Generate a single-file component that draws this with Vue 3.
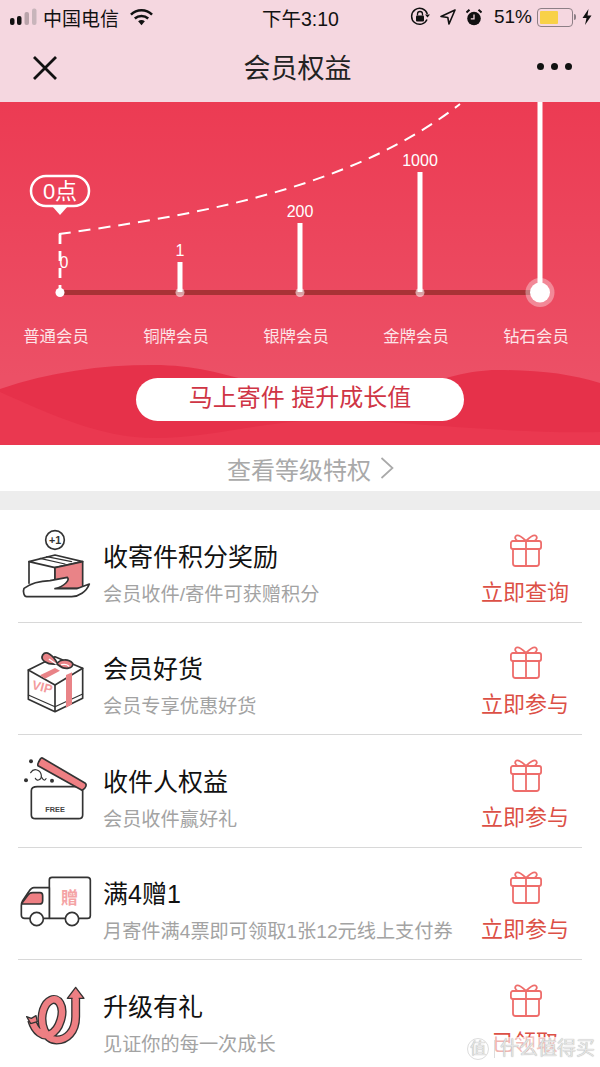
<template>
  <div class="page">
    <header class="top">
      <div class="status">
        <div class="status-left">
          <svg class="signal" width="28" height="18" viewBox="0 0 28 18">
            <rect x="0" y="10" width="4.5" height="7" rx="2" fill="#111" />
            <rect x="7" y="8" width="4.5" height="9" rx="2" fill="#111" />
            <rect x="14.500" y="4" width="4.500" height="13" rx="2" fill="#b9a3aa" />
            <rect x="22" y="0.500" width="4.500" height="16.500" rx="2" fill="#c8b5bb" />
          </svg>
          <span>中国电信</span>
          <svg class="wifi" width="23" height="17" viewBox="0 0 24 17">
            <path d="M1 5.500C7 -0.500 17 -0.500 23 5.500" fill="none" stroke="#111" stroke-width="2.600" />
            <path d="M5 9.500C9 6 15 6 19 9.500" fill="none" stroke="#111" stroke-width="2.600" />
            <path d="M8.500 12.300C10.500 10.800 13.500 10.800 15.500 12.300L12 16.500Z" fill="#111" />
          </svg>
        </div>
        <div class="time">下午3:10</div>
        <div class="status-right">
          <svg width="20" height="20" viewBox="0 0 20 20">
            <path d="M17 12.500A8 8 0 1 1 17.300 7" fill="none" stroke="#111" stroke-width="1.500" />
            <path d="M15 7.500H20L17.500 10.500Z" fill="#111" />
            <rect x="6" y="8.500" width="8" height="6" rx="1" fill="#111" />
            <path d="M7.500 8.500V7a2.500 2.500 0 0 1 5 0v1.500" fill="none" stroke="#111" stroke-width="1.300" />
          </svg>
          <svg class="gap-s" width="16" height="16" viewBox="0 0 16 16">
            <path d="M15 1L1 7.500L7.800 8.500L9 15Z" fill="none" stroke="#111" stroke-width="1.600" stroke-linejoin="round" />
          </svg>
          <svg class="gap-s" width="16" height="17" viewBox="0 0 16 17">
            <circle cx="8" cy="9.500" r="6.800" fill="#111" />
            <path d="M8 5.500V9.800H4.800" fill="none" stroke="#f5d7e0" stroke-width="1.300" />
            <path d="M0.500 3.500L3.500 0.800M15.500 3.500L12.500 0.800" stroke="#111" stroke-width="2" />
          </svg>
          <span class="percent">51%</span>
          <div class="battery"><div class="battery-fill"></div></div>
          <div class="battery-nub"></div>
          <svg class="bolt" width="10" height="16" viewBox="0 0 10 16">
            <path d="M6.500 0L0.500 9H4.500L3 16L9.500 6.500H5.500Z" fill="#111" />
          </svg>
        </div>
      </div>
      <nav class="nav">
        <svg class="close" width="26" height="26" viewBox="0 0 26 26">
          <path d="M2 2L24 24M24 2L2 24" stroke="#111" stroke-width="2.800" />
        </svg>
        <div class="nav-title">会员权益</div>
        <div class="dots"><i></i><i></i><i></i></div>
      </nav>
    </header>

    <section class="hero">
      <svg class="waves" width="600" height="343" viewBox="0 0 600 343">
        <path d="M0 287C50 270 100 263 153 263C200 263 230 274 270 285H420C440 277 470 268 497 268C540 268 570 272 600 281V343H0Z" fill="#e6314a" />
        <path d="M0 290C50 312 100 336 155 336C210 336 260 320 320 318C400 318 500 332 600 330V343H0Z" fill="#ea3850" />
      </svg>

      <svg class="chart" width="600" height="225" viewBox="0 102 600 225">
        <path d="M60 234V290" fill="none" stroke="#fff" stroke-width="2.800" stroke-dasharray="10 7" />
        <path d="M59 234C190 216 350 190 460 104" fill="none" stroke="#fff" stroke-width="2" stroke-dasharray="12 8" />
        <rect x="60" y="290" width="480" height="5" fill="#a83236" />
        <circle cx="60" cy="292.500" r="4.500" fill="#fff" />
        <g v-for="bar in bars" :key="bar.x">
          <circle :cx="bar.x" cy="292.500" r="4.500" fill="#fff" fill-opacity="0.550" />
          <rect :x="bar.x - 2.500" :y="bar.top" width="5" :height="292 - bar.top" fill="#fff" />
          <text class="bar-num" :x="bar.x" :y="bar.top - 6" text-anchor="middle">{{ bar.value }}</text>
        </g>
        <text class="bar-num" x="64" y="268" text-anchor="middle">0</text>
        <circle cx="540" cy="292.500" r="14.500" fill="#fff" fill-opacity="0.350" />
        <circle cx="540" cy="292.500" r="10" fill="#fff" />
        <rect x="31" y="176" width="58" height="30" rx="15" fill="none" stroke="#fff" stroke-width="2.500" />
        <path d="M52 206H68L60 215Z" fill="#fff" />
        <text class="bubble" x="60" y="199" text-anchor="middle">0点</text>
      </svg>

      <div class="levels">
        <span v-for="name in levels" :key="name">{{ name }}</span>
      </div>
      <div class="send-btn">马上寄件 提升成长值</div>
    </section>

    <div class="more">
      <span>查看等级特权</span>
      <svg width="14" height="22" viewBox="0 0 14 22">
        <path d="M1.500 1L12.500 11L1.500 21" fill="none" stroke="#a9a9a9" stroke-width="1.700" />
      </svg>
    </div>
    <div class="spacer"></div>

    <ul class="list">
      <li v-for="item in items" :key="item.title" class="row">
        <svg v-if="item.icon === 'box'" class="icon" viewBox="24 18 240 240">
          <g class="ink">
            <circle cx="135" cy="60" r="28" />
            <path d="M57 125L135 105L218 125L135 143Z" />
            <path d="M57 125V190M135 143V180" />
            <path d="M135 143L218 125V205L135 205Z" fill="#e98387" />
            <path d="M90 115L165 132M110 110L185 125" stroke-width="3.500" />
            <path d="M42 205C60 192 85 183 120 182L172 172C180 180 165 198 135 206H200L238 192C230 215 205 230 185 230H50C42 230 38 215 42 205Z" fill="#fff" />
          </g>
          <text class="plus" x="135" y="71" text-anchor="middle">+1</text>
        </svg>

        <svg v-else-if="item.icon === 'gift'" class="icon" viewBox="24 -6 240 240">
          <g class="ink">
            <path d="M55 90L135 50L218 85L135 135Z" />
            <path d="M55 90V178L135 215V135M135 215L218 175V85" />
            <path d="M55 165L135 200L218 162" stroke-width="3.500" />
            <path d="M90 106L135 84L150 92L105 116Z" fill="#e98387" stroke="none" />
            <path d="M168 105L186 97V193L168 203Z" fill="#e98387" stroke="none" />
            <path d="M140 72C110 75 90 60 98 45C108 30 130 45 142 70C150 58 175 55 188 70C192 85 165 92 145 75Z" fill="#e98387" />
            <path d="M118 58C125 62 132 68 138 72M155 74C165 72 172 74 176 78" stroke="#fff" stroke-width="4" />
          </g>
          <text class="vip" transform="translate(64 146) rotate(15)">VIP</text>
        </svg>

        <svg v-else-if="item.icon === 'free'" class="icon" viewBox="24 3 240 240">
          <g class="ink">
            <path d="M82 110H206C214 110 218 116 218 122V195C218 202 214 206 206 206H76C68 206 64 202 64 195V122C64 116 68 110 82 110Z" fill="#fff" />
            <path d="M97 24L226 100C230 104 228 110 224 115L216 121L84 47C82 44 84 40 86 36L91 27C93 24 95 23 97 24Z" fill="#ee7f83" />
            <path d="M62 68C72 52 92 60 94 76C96 90 80 95 76 85" stroke-width="3.500" />
            <path d="M95 82C100 92 106 92 108 86" stroke-width="3.500" />
          </g>
          <circle cx="63" cy="34" r="6" fill="#333" />
          <circle cx="48" cy="91" r="6" fill="#333" />
          <circle cx="126" cy="92" r="6" fill="#333" />
          <text class="free" x="135" y="186" text-anchor="middle">FREE</text>
        </svg>

        <svg v-else-if="item.icon === 'truck'" class="icon" viewBox="24 12 240 240">
          <g class="ink">
            <path d="M118 178V62C118 57 121 55 126 55H232C238 55 241 58 241 63V170C241 175 238 178 232 178Z" fill="#fff" />
            <path d="M118 86H72C64 86 60 92 55 100L38 125C35 130 34 133 34 140V168C34 174 38 178 44 178H118Z" fill="#fff" />
            <path d="M36 132L54 108C57 103 62 101 68 101H90C95 101 98 104 98 110V125C98 131 94 135 88 135H36Z" fill="#ee7f83" />
            <circle cx="80" cy="180" r="20" fill="#fff" />
            <circle cx="186" cy="180" r="20" fill="#fff" />
          </g>
          <text class="zeng" x="179" y="135" text-anchor="middle">贈</text>
        </svg>

        <svg v-else class="icon" viewBox="24 3 240 240">
          <g fill="none" stroke-linejoin="round">
            <path d="M197 70V125C197 170 170 195 140 195C105 195 88 145 100 105C110 75 135 62 150 85C165 110 150 165 120 178C100 188 75 170 65 135" stroke="#333" stroke-width="27" />
            <path d="M197 70V125C197 170 170 195 140 195C105 195 88 145 100 105C110 75 135 62 150 85C165 110 150 165 120 178C100 188 75 170 65 135" stroke="#ee7f83" stroke-width="19" />
          </g>
          <path d="M197 37L222 70H172Z" fill="#ee7f83" stroke="#333" stroke-width="4" stroke-linejoin="round" />
          <rect x="188" y="66" width="18" height="10" fill="#ee7f83" />
          <path d="M50 125L64 130L78 122L82 140L62 146Z" fill="#ee7f83" stroke="#333" stroke-width="4" stroke-linejoin="round" />
        </svg>

        <div class="copy">
          <div class="title">{{ item.title }}</div>
          <div class="sub">{{ item.sub }}</div>
        </div>

        <div class="action">
          <svg class="gift" width="32" height="33" viewBox="0 0 32 33">
            <g fill="none" stroke="#ee6d6b" stroke-width="1.800" stroke-linejoin="round">
              <rect x="0.900" y="7" width="30.200" height="8" rx="2" />
              <path d="M3 15V29.500C3 31 4 32 5.500 32H26.500C28 32 29 31 29 29.500V15M16 7V32" />
              <path d="M16 7C12 3 9 0.500 6.500 1.500C4 3 5.500 6 8 7M16 7C20 3 23 0.500 25.500 1.500C28 3 26.500 6 24 7" />
            </g>
          </svg>
          <span class="action-text">{{ item.action }}</span>
        </div>
      </li>
    </ul>

    <div class="mark">
      <span class="mark-circle">值</span>
      <span class="mark-sep"></span>
      <span>什么值得买</span>
    </div>
  </div>
</template>

<script setup>
const levels = ['普通会员', '铜牌会员', '银牌会员', '金牌会员', '钻石会员']

const bars = [
  { x: 180, top: 262, value: '1' },
  { x: 300, top: 223, value: '200' },
  { x: 420, top: 172, value: '1000' },
  { x: 540, top: 102, value: '' }
]

const items = [
  { icon: 'box', title: '收寄件积分奖励', sub: '会员收件/寄件可获赠积分', action: '立即查询' },
  { icon: 'gift', title: '会员好货', sub: '会员专享优惠好货', action: '立即参与' },
  { icon: 'free', title: '收件人权益', sub: '会员收件赢好礼', action: '立即参与' },
  { icon: 'truck', title: '满4赠1', sub: '月寄件满4票即可领取1张12元线上支付券', action: '立即参与' },
  { icon: 'arrow', title: '升级有礼', sub: '见证你的每一次成长', action: '已领取' }
]
</script>

<style>
html,
body {
  margin: 0;
  background: #fff;
}
</style>

<style scoped>
.page {
  position: relative;
  width: 600px;
  height: 1067px;
  overflow: hidden;
  background: #fff;
  font-family: "Liberation Sans", "Noto Sans CJK SC", sans-serif;
}

.top {
  height: 102px;
  background: #f5d7e0;
  color: #111;
}

.status {
  height: 34px;
  padding: 0 8px 0 10px;
  display: flex;
  align-items: center;
  justify-content: space-between;
  font-size: 19px;
}

.status-left,
.status-right {
  width: 230px;
  display: flex;
  align-items: center;
}

.status-left span {
  margin: 0 11px 0 5px;
}

.status-right {
  justify-content: flex-end;
}

.time {
  font-size: 19.500px;
  margin-left: -1px;
}

.gap-s {
  margin-left: 10px;
}

.percent {
  margin: 0 5px 0 12px;
}

.battery {
  padding: 2px;
  border: 1.500px solid #8d7f86;
  border-radius: 4px;
  width: 30px;
  height: 13px;
}

.battery-fill {
  width: 18px;
  height: 13px;
  background: #f8d148;
  border-radius: 1px;
}

.battery-nub {
  width: 2px;
  height: 6px;
  margin: 0 6px 0 1px;
  background: #8d7f86;
  border-radius: 0 2px 2px 0;
}

.nav {
  height: 68px;
  box-sizing: border-box;
  padding: 0 28px 4px 32px;
  display: flex;
  align-items: center;
  justify-content: space-between;
}

.close {
  margin-top: 3px;
}

.nav-title {
  font-size: 27px;
  color: #222;
  margin-left: 0;
}

.dots {
  display: flex;
  gap: 7px;
}

.dots i {
  width: 7px;
  height: 7px;
  border-radius: 50%;
  background: #111;
}

.hero {
  position: relative;
  height: 343px;
  background: linear-gradient(#ec3b53, #ec5066 80%);
  color: #fff;
  overflow: hidden;
}

.waves {
  position: absolute;
  left: 0;
  top: 0;
}

.chart {
  position: relative;
  display: block;
}

.bar-num {
  font-size: 16px;
  fill: #fff;
}

.bubble {
  font-size: 22px;
  fill: #fff;
}

.levels {
  position: relative;
  display: grid;
  grid-template-columns: repeat(5, 120px);
  margin: -1px 0 0 -4px;
  font-size: 16.400px;
  line-height: 20px;
  text-align: center;
  color: #fde4e8;
}

.send-btn {
  position: relative;
  width: 328px;
  height: 43px;
  margin: 32px auto 0;
  border-radius: 22px;
  background: #fff;
  color: #cf3545;
  font-size: 24px;
  line-height: 39px;
  text-align: center;
}

.more {
  height: 46px;
  padding-left: 21px;
  display: flex;
  align-items: center;
  justify-content: center;
  gap: 9px;
  font-size: 24px;
  color: #a9a9a9;
}

.spacer {
  height: 19px;
  background: #ededed;
}

.list {
  margin: 0;
  padding: 0;
  list-style: none;
}

.row {
  height: 112.500px;
  margin: 0 18px;
  box-sizing: border-box;
  border-bottom: 1.500px solid #d8d8d8;
  display: flex;
  align-items: center;
}

.icon {
  width: 80px;
  height: 80px;
  flex: none;
  margin-right: 5px;
}

.ink {
  fill: none;
  stroke: #333;
  stroke-width: 5;
  stroke-linejoin: round;
  stroke-linecap: round;
}

.plus {
  font-size: 32px;
  font-weight: bold;
  fill: #333;
}

.vip {
  font-size: 38px;
  font-weight: bold;
  fill: #f29a9c;
}

.free {
  font-size: 22px;
  font-weight: bold;
  fill: #444;
}

.zeng {
  font-size: 52px;
  font-weight: bold;
  fill: #f4a3a5;
}

.copy {
  flex: 1;
  min-width: 0;
  padding-top: 20px;
}

.title {
  font-size: 25px;
  line-height: 36px;
  color: #111;
}

.sub {
  margin-top: 2px;
  font-size: 19.200px;
  line-height: 36px;
  color: #a3a3a3;
  white-space: nowrap;
}

.action {
  width: 88px;
  flex: none;
  margin-right: 13px;
  display: flex;
  flex-direction: column;
  align-items: center;
  gap: 12px;
  padding-top: 9px;
}

.gift {
  margin-left: 2px;
}

.action-text {
  font-size: 22px;
  line-height: 28px;
  color: #dc5046;
  white-space: nowrap;
}

.mark {
  position: absolute;
  right: 5px;
  bottom: 6px;
  display: flex;
  align-items: center;
  font-size: 19px;
  line-height: 24px;
  color: #e4e4e4;
  text-shadow: 0 0 1px #999;
  background: linear-gradient(90deg, rgba(255, 255, 255, 0.5), rgba(255, 255, 255, 0.8));
}

.mark-circle {
  width: 20px;
  height: 20px;
  border: 1.500px solid #ddd;
  border-radius: 50%;
  font-size: 16px;
  line-height: 20px;
  text-align: center;
}

.mark-sep {
  width: 1px;
  height: 18px;
  margin: 0 5px;
  background: #ddd;
}
</style>
